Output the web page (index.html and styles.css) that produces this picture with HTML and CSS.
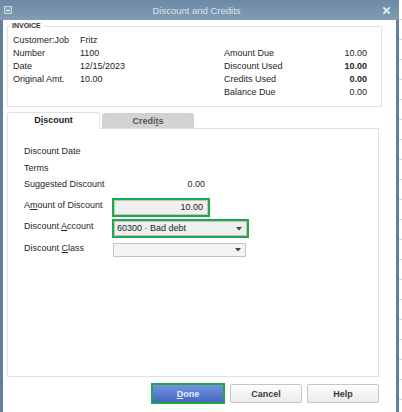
FILE: index.html
```html
<!DOCTYPE html>
<html lang="en">
<head>
  <meta charset="UTF-8" />
  <meta name="viewport" content="width=device-width, initial-scale=1.0"/>
  <title>Discount and Credits</title>
  <link rel="stylesheet" href="styles.css">
</head>
<body>

  <div class="window">
    <!-- TITLE BAR -->
    <div class="titlebar">
      <span class="sys-icon"><span></span></span>
      <span class="title">Discount and Credits</span>
      <svg class="close" width="7" height="7" viewBox="0 0 7 7">
        <path d="M1 1 L6 6 M6 1 L1 6" stroke="#e9eff5" stroke-width="1.8" stroke-linecap="round"/>
      </svg>
    </div>

    <div class="frame">
      <!-- INVOICE SUMMARY -->
      <fieldset class="invoice">
        <legend>INVOICE</legend>
        <div class="inv-grid">
          <span>Customer:Job</span><span>Fritz</span><span></span><span></span>
          <span>Number</span><span>1100</span><span>Amount Due</span><span class="num">10.00</span>
          <span>Date</span><span>12/15/2023</span><span>Discount Used</span><span class="num bold">10.00</span>
          <span>Original Amt.</span><span>10.00</span><span>Credits Used</span><span class="num bold">0.00</span>
          <span></span><span></span><span>Balance Due</span><span class="num">0.00</span>
        </div>
      </fieldset>

      <!-- TABS -->
      <div class="tabs">
        <div class="tab active">D<u>i</u>scount</div>
        <div class="tab">Credi<u>t</u>s</div>
      </div>

      <div class="tab-panel">
        <div class="row r-date"><span class="lbl">Discount Date</span></div>
        <div class="row r-terms"><span class="lbl">Terms</span></div>
        <div class="row r-suggest">
          <span class="lbl">Suggested Discount</span>
          <span class="suggest-val">0.00</span>
        </div>

        <div class="row field-row r-amount">
          <span class="lbl">A<u>m</u>ount of Discount</span>
          <div class="field amount hl">10.00</div>
        </div>
        <div class="row field-row r-account">
          <span class="lbl">Discount <u>A</u>ccount</span>
          <div class="field select hl">
            <span>60300 · Bad debt</span>
            <svg width="6" height="4" viewBox="0 0 6 4"><path d="M0 0 H6 L3 3.5 Z" fill="#444"/></svg>
          </div>
        </div>
        <div class="row field-row r-class">
          <span class="lbl">Discount <u>C</u>lass</span>
          <div class="field select">
            <span></span>
            <svg width="6" height="4" viewBox="0 0 6 4"><path d="M0 0 H6 L3 3.5 Z" fill="#444"/></svg>
          </div>
        </div>
      </div>

      <!-- BUTTONS -->
      <div class="actions">
        <button class="btn primary"><u>D</u>one</button>
        <button class="btn">Cancel</button>
        <button class="btn">Help</button>
      </div>
    </div>
  </div>

</body>
</html>
```

FILE: styles.css
```css
* {
  box-sizing: border-box;
  margin: 0;
  padding: 0;
}
body {
  font-family: "Liberation Sans", Arial, sans-serif;
  font-size: 9px;
  color: #262626;
  background:
    repeating-linear-gradient(to bottom, #fff 0 19px, #d2d2d2 19px 20px) right top / 3px 100% no-repeat,
    #fff;
}

.window {
  width: 399px;
  height: 412px;
  display: flex;
  flex-direction: column;
}

/* === TITLE BAR === */
.titlebar {
  height: 20px;
  display: flex;
  align-items: center;
  padding: 0 9px 0 4px;
  background: linear-gradient(#6c89a5, #829cb4);
  color: #dbe4ed;
  font-size: 9.5px;
}
.titlebar .title {
  flex: 1;
  text-align: center;
  padding-right: 2px;
}
.sys-icon {
  width: 8px;
  height: 8px;
  border: 1px solid #c9d5e0;
  background: #8ea4b9;
  display: flex;
  align-items: center;
  justify-content: center;
}
.sys-icon span {
  width: 4px;
  height: 1px;
  background: #e4ebf1;
}

.frame {
  flex: 1;
  background: #fff;
  border-left: 3px solid #60809d;
  border-right: 3px solid #60809d;
  padding-left: 4px;
}

/* === INVOICE BOX === */
.invoice {
  margin: 2px 14px 0 0;
  border: 1px solid #e2e2e2;
  padding: 0 14px 7.5px 5px;
}
.invoice legend {
  font-size: 7px;
  line-height: 8px;
  font-weight: bold;
  color: #333;
  padding: 0 2px;
  margin-left: -3px;
}
.inv-grid {
  display: grid;
  grid-template-columns: 67px 144px 1fr auto;
  grid-auto-rows: 13px;
  line-height: 13px;
  padding-top: 3.5px;
}
.num {
  text-align: right;
}
.bold {
  font-weight: bold;
}

/* === TABS === */
.tabs {
  display: flex;
  align-items: flex-end;
  gap: 2px;
  margin-top: 5px;
  height: 16px;
}
.tab {
  width: 92px;
  height: 15px;
  border: 1px solid #d0d0d0;
  border-bottom: none;
  border-radius: 3px 3px 0 0;
  background: #d3d3d3;
  color: #555;
  font-weight: bold;
  text-align: center;
  line-height: 14px;
}
.tab.active {
  width: 93px;
  height: 17px;
  margin-bottom: -1px;
  background: #fff;
  color: #222;
  border-color: #e0e0e0;
  line-height: 15px;
  position: relative;
}

.tab-panel {
  height: 249px;
  margin-right: 17px;
  border: 1px solid #e0e0e0;
  padding: 15px 0 0 16px;
}
.row {
  display: flex;
  align-items: center;
  height: 14px;
}
.lbl {
  width: 90px;
  flex-shrink: 0;
}
.r-terms { margin-top: 3px; }
.r-suggest { margin-top: 2px; }
.suggest-val {
  width: 91px;
  text-align: right;
}

.field-row {
  align-items: flex-start;
  height: 15px;
}
.field-row .lbl {
  line-height: 11px;
}
.r-amount { margin-top: 9px; }
.r-account { margin-top: 6px; }
.r-class { margin-top: 7px; height: 14px; }

.field {
  height: 15px;
  border: 1px solid #c4c4c4;
  background: #efefef;
  line-height: 13px;
  color: #1c1c1c;
}
.r-class .field {
  height: 14px;
  width: 135px;
  margin-left: -1px;
  background: #f3f3f3;
}
.field.hl {
  box-shadow: 0 0 0 2px #20a64b;
}
.field.amount {
  width: 94px;
  text-align: right;
  padding-right: 4px;
}
.field.select {
  width: 133px;
  display: flex;
  align-items: center;
  justify-content: space-between;
  padding: 0 4px 0 2px;
}

/* === BUTTONS === */
.actions {
  display: flex;
  justify-content: flex-end;
  align-items: center;
  gap: 5px;
  margin-top: 6px;
  padding-right: 17px;
  height: 21px;
}
.btn {
  width: 72px;
  height: 19px;
  border: 1px solid #c6c6c6;
  border-radius: 2px;
  background: linear-gradient(#fefefe, #ebebeb);
  font-family: "Liberation Sans", Arial, sans-serif;
  font-size: 9px;
  font-weight: bold;
  color: #3a3a3a;
}
.btn.primary {
  width: 74px;
  height: 21px;
  border: 2px solid #1fa64a;
  border-radius: 0;
  background: linear-gradient(#7596dd, #4266c4);
  color: #e6ecfb;
}
```
